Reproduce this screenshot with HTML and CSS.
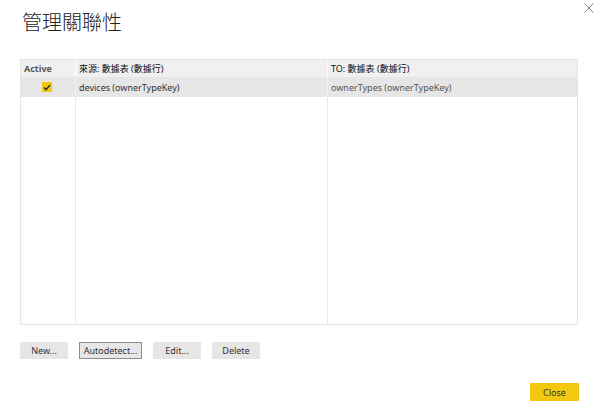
FILE: index.html
```html
<!DOCTYPE html>
<html>
<head>
<meta charset="utf-8">
<link rel="stylesheet" href="styles.css">
</head>
<body>
<div class="dialog">
  <svg class="close-x" width="10" height="10" viewBox="0 0 10 10"><path d="M0.5 0.5 L9.5 9.5 M9.5 0.5 L0.5 9.5" stroke="#8a8a8a" stroke-width="1" fill="none"/></svg>
  <h1 class="title">管理關聯性</h1>
  <div class="grid">
    <div class="cell head c1 bold">Active</div>
    <div class="cell head c2">來源: 數據表 (數據行)</div>
    <div class="cell head c3">TO: 數據表 (數據行)</div>
    <div class="cell row c1 center"><span class="check"><svg width="8" height="7" viewBox="0 0 8 7"><path d="M1 3.6 L3 5.6 L7 1" stroke="#2b2b2b" stroke-width="1.4" fill="none"/></svg></span></div>
    <div class="cell row c2 dark">devices (ownerTypeKey)</div>
    <div class="cell row c3 gray">ownerTypes (ownerTypeKey)</div>
    <div class="cell body c1"></div>
    <div class="cell body c2"></div>
    <div class="cell body c3"></div>
  </div>
  <div class="actions">
    <button class="btn b-new">New...</button>
    <button class="btn b-auto focused">Autodetect...</button>
    <button class="btn b-edit">Edit...</button>
    <button class="btn b-del">Delete</button>
  </div>
  <div class="footer">
    <button class="btn primary">Close</button>
  </div>
</div>
</body>
</html>
```
FILE: styles.css
```css
html, body {
  margin: 0;
  padding: 0;
  background: #fff;
}
.dialog {
  position: relative;
  width: 600px;
  height: 409px;
  box-sizing: border-box;
  padding: 0 22px 0 20px;
  display: flex;
  flex-direction: column;
  font-family: "Noto Sans", "Noto Sans CJK TC", sans-serif;
}
.close-x {
  position: absolute;
  top: 3px;
  right: 6px;
}
.title {
  margin: 9px 0 0 2px;
  height: 26px;
  font-family: "Noto Sans CJK TC", sans-serif;
  font-weight: 300;
  font-size: 20px;
  line-height: 26px;
  color: #222;
}
.grid {
  margin-top: 24px;
  height: 266px;
  box-sizing: border-box;
  border: 1px solid #e4e4e4;
  display: grid;
  grid-template-columns: 55px 252px 1fr;
  grid-template-rows: 17px 20px 1fr;
}
.cell {
  box-sizing: border-box;
  border-right: 1px solid #e8e8e8;
  font-size: 9px;
  display: flex;
  align-items: center;
  padding-left: 3px;
  white-space: nowrap;
  overflow: hidden;
}
.cell.c3 { border-right: none; }
.head {
  background: #f0f0f0;
  color: #111;
  border-right-color: #fafafa;
}
.head.bold {
  font-weight: 700;
  color: #555;
}
.row {
  background: #e6e6e6;
  font-size: 9px;
  border-right-color: #f4f4f4;
}
.row.center {
  justify-content: center;
  padding-left: 0;
}
.dark { color: #333; }
.gray { color: #555; }
.check {
  width: 10px;
  height: 10px;
  background: #f2c811;
  display: flex;
  align-items: center;
  justify-content: center;
  margin-left: -2px;
}
.actions {
  margin-top: 17px;
  display: flex;
  gap: 11px;
  height: 17px;
}
.btn {
  margin: 0;
  border: none;
  background: #e6e6e6;
  color: #333;
  font-family: "Noto Sans", sans-serif;
  font-size: 9px;
  padding: 0;
  height: 17px;
  width: 48px;
  box-sizing: border-box;
}
.b-auto { width: 63px; }
.focused { border: 1px solid #8c8c8c; }
.footer {
  margin-top: 24px;
  display: flex;
  justify-content: flex-end;
}
.primary {
  background: #f2c811;
  width: 49px;
  height: 18px;
  margin-right: -1px;
}
```
